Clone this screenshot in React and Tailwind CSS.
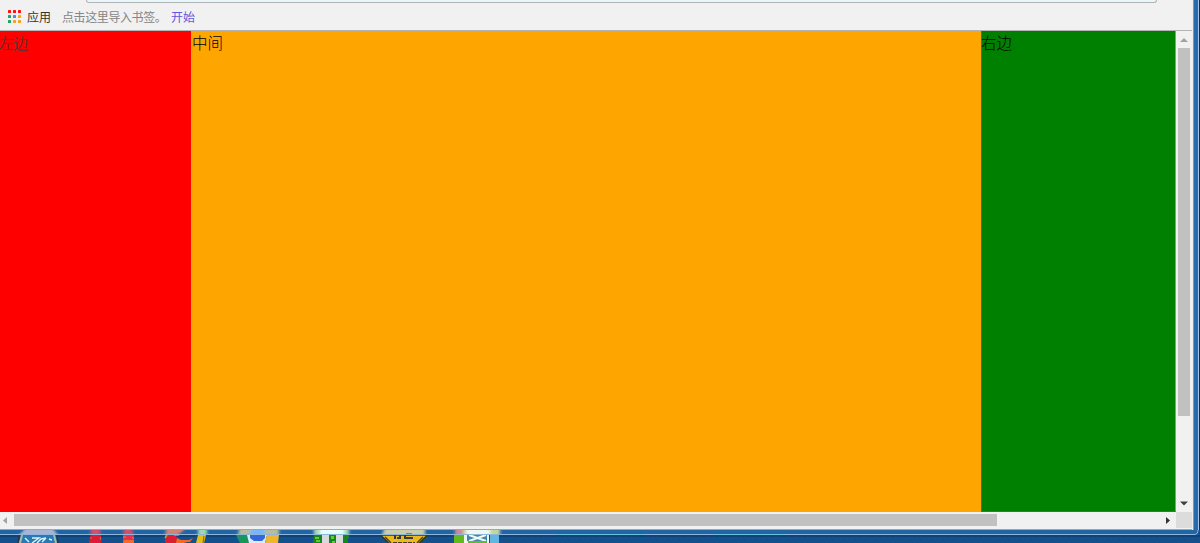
const ink = "font-['Noto_Sans_CJK_SC',sans-serif] whitespace-nowrap";

function AppsIcon() {
  const colors = ["#ff1010", "#ff1010", "#ff1010", "#16a765", "#5b84e8", "#f9a11b", "#16a765", "#f9a11b", "#f9a11b"];
  return (
    <svg className="-mt-px" width="13" height="13" viewBox="0 0 13 13">
      {colors.map((c, i) => (
        <rect key={i} x={(i % 3) * 5} y={Math.floor(i / 3) * 5} width="3" height="3" rx=".6" fill={c} />
      ))}
    </svg>
  );
}

function Toolbar() {
  return (
    <header className="h-[31px] shrink-0 border-b border-[#b5b3b6] bg-[#f1f1f1]">
      <div className="ml-[86px] mr-[35px] h-[3px] rounded-b-[3px] border-x border-b border-[#b5b3b6] bg-[#e6f8fb]" />
      <div className={`${ink} flex h-[27px] items-center pl-[8px] text-[12px] leading-[14px]`}>
        <AppsIcon />
        <span className="ml-[6px] text-[#333]">应用</span>
        <span className="ml-[11px] w-[109px] tracking-[-0.4px] text-[#858585]">点击这里导入书签。</span>
        <span className="text-[#6258dc]">开始</span>
      </div>
    </header>
  );
}

function Columns() {
  return (
    <main className={`${ink} flex min-w-0 flex-1 text-[15.5px] leading-[22px] font-light text-black`}>
      <section className="w-[191px] bg-[#ff0000]"><span className="-ml-px text-[14.5px] font-normal text-[#603038]">左边</span></section>
      <section className="flex-1 bg-[#ffa500] pl-px">中间</section>
      <section className="w-[195px] border-x border-b border-b-[#806000] border-l-[#806000] border-r-[#87a56b] bg-[#008000]"><span className="-ml-px">右边</span></section>
    </main>
  );
}

function VerticalScrollbar() {
  return (
    <div className="flex w-[16px] flex-col items-center bg-[#f1f1f1]">
      <svg width="16" height="17" viewBox="0 0 16 17"><path d="M4 11 8 7l4 4z" fill="#a3a3a3" /></svg>
      <div className="h-[368px] w-[12px] bg-[#c1c1c1]" />
      <div className="flex-1" />
      <svg width="16" height="17" viewBox="0 0 16 17"><path d="M4 6.500h8L8 10.500z" fill="#404040" /></svg>
    </div>
  );
}

function HorizontalScrollbar() {
  return (
    <div className="flex h-[17px] shrink-0 items-start bg-[#f1f1f1]">
      <svg width="14" height="17" viewBox="0 0 14 17"><path d="M7 5v7L3 8.500z" fill="#a3a3a3" /></svg>
      <div className="mt-[2px] h-[12px] w-[983px] bg-[#c1c1c1]" />
      <div className="flex-1" />
      <svg width="17" height="17" viewBox="0 0 17 17"><path d="M7 5v7l4-3.500z" fill="#333" /></svg>
      <div className="h-[16px] w-[16px] bg-[#dcdcdc]" />
    </div>
  );
}

function Taskbar() {
  return (
    <svg className="block shrink-0" width="1200" height="13" viewBox="0 0 1200 13">
      <defs>
        <filter id="glass" x="-10%" y="-50%" width="120%" height="200%">
          <feGaussianBlur stdDeviation="1.5 .3" />
        </filter>
        <clipPath id="frameArea"><path d="M0 0h1198v5H0z" /></clipPath>
        <pattern id="grain" width="11" height="7" patternUnits="userSpaceOnUse">
          <path d="M1 1h1M7 3h2M4 5h1M10 6h1" stroke="#0c3969" opacity=".4" />
        </pattern>
      </defs>
      <path d="M0 0h1200v13H0z" fill="#14508c" />
      <path d="M0 0h1198v5H0z" fill="#2265a5" />
      <path d="M0 5h1200v2H0z" fill="#10427a" />
      <path d="M510 5h690v8H510z" fill="url(#grain)" />

      <g clipPath="url(#frameArea)">
        <g filter="url(#glass)">
          <path d="M24 0h30l4 5H19z" fill="#a9b3d6" />
          <path d="M91 0h9l1 5h-11zM124 0h8l2 5h-11z" fill="#d6506c" />
          <path d="M166 0h18l-6 5h-13z" fill="#d28476" />
          <path d="M198 0h9v5h-9z" fill="#9bd9b0" />
          <path d="M239 0h40v5h-41z" fill="#b9bd9e" />
          <path d="M251 0h14v5h-16z" fill="#76b8fb" />
          <path d="M314 0h35v5h-35z" fill="#a7ddb5" />
          <path d="M320 0h24v5h-24z" fill="#e6ffff" />
          <path d="M384 0h41v5h-43z" fill="#c7cfac" />
          <path d="M455 0h45v5h-45z" fill="#c1d79f" />
          <path d="M466 0h24v5h-24z" fill="#edf7f3" />
          <path d="M455 0h8v5h-8z" fill="#d0889d" />
        </g>
      </g>

      <path d="M22 5h33l3 8H18z" fill="#2879b5" />
      <path d="M22 5l-2 8M54 5l2 8" stroke="#a9bda3" strokeWidth="2" />
      <path d="M57 5l1 8M19 6l-1 7" stroke="#263847" strokeWidth="1.5" />
      <path d="M25 8l4 4M32 8h7l-7 5M37 13l4-4 5-1M46 8l-4 4M49 9l3 1" fill="none" stroke="#d9f4fb" strokeWidth="1.4" />

      <path d="M91 5h10v8H89l1-6z" fill="#dc1b38" />
      <path d="M90 8h2M100 7l1 3" stroke="#9a8a35" />
      <path d="M123 5h11v8h-11z" fill="#e8304a" />
      <path d="M124 10h10v3h-11z" fill="#f56a2c" />
      <path d="M123 7h3M132 7l2 2" stroke="#a99e37" />

      <path d="M165 5h11l2 8h-13z" fill="#d91f30" />
      <path d="M165 8l2-3M174 5h5" stroke="#c5a31d" strokeWidth="1.5" />
      <path d="M177 8l4 2h8l4-2-3 4h-3l-3 1h-8z" fill="#f56a22" />
      <path d="M198 5h8l-2 8h-8z" fill="#e9bd18" />
      <path d="M204 6l-1 7" stroke="#73671f" />

      <path d="M236 5h12l2 8h-10z" fill="#17965d" />
      <path d="M247 5h20l-2 8h-16z" fill="#dcecf5" />
      <path d="M250 5h15v3l-3 3h-8l-4-3z" fill="#3368da" />
      <path d="M267 5h12l-1 8h-13z" fill="#eeb62c" />

      <path d="M314 5h35v3h-1v5h-35z" fill="#168719" />
      <path d="M322 5h7v8h-7zM336 5h7v8h-7z" fill="#d8dadc" />
      <path d="M315 7h4v2h-4zM316 10h4v2h-4zM331 6h3v3h-3zM332 11h3v2h-3z" fill="#63cb38" />

      <path d="M380.500 5h47l-9 9h-29z" fill="#ecb91a" stroke="#35361e" strokeWidth="1.500" />
      <path d="M385 7l6 6M423 7l-6 6" stroke="#4b421d" strokeWidth="1.500" />
      <path d="M395 4v5M400 4v4h-3M405 4v4h8M406 4.500h6" fill="none" stroke="#383b32" strokeWidth="2" />
      <path d="M393 12.500h22" stroke="#453d20" strokeDasharray="4 1" />

      <path d="M454 5h10v8h-10z" fill="#61b91e" />
      <path d="M464 5h25v8h-25z" fill="#eef7f1" />
      <path d="M467 5h20v6h-20z" fill="#4186ac" />
      <path d="M469 5l17 6m0-6-17 6" stroke="#effaf2" strokeWidth="2" />
      <path d="M468 11h19v2h-19z" fill="#5ebd2e" />
      <path d="M490 5h9v8h-9z" fill="#60b7df" />

      <path d="M0 4.500h1194q4 0 4-4.500" fill="none" stroke="#90b6dc" />
      <path d="M555 4.500h90M714 4.500h72" stroke="#67c2dd" />
    </svg>
  );
}

export default function App() {
  return (
    <div className="flex h-[543px] w-[1200px] flex-col overflow-hidden bg-[#14508c]">
      <div className="flex h-[530px] shrink-0">
        <div className="flex w-[1192px] flex-col border-b border-[#a4a4a4]">
          <Toolbar />
          <div className="flex min-h-0 flex-1">
            <Columns />
            <VerticalScrollbar />
          </div>
          <HorizontalScrollbar />
        </div>
        <div className="w-px bg-[#eeeeee]" />
        <div className="w-px bg-[#8a9a85]" />
        <div className="w-1 bg-[#266bad]" />
        <div className="w-px bg-[#a7c3e6]" />
        <div className="w-px bg-[#092c5b]" />
      </div>
      <Taskbar />
    </div>
  );
}
